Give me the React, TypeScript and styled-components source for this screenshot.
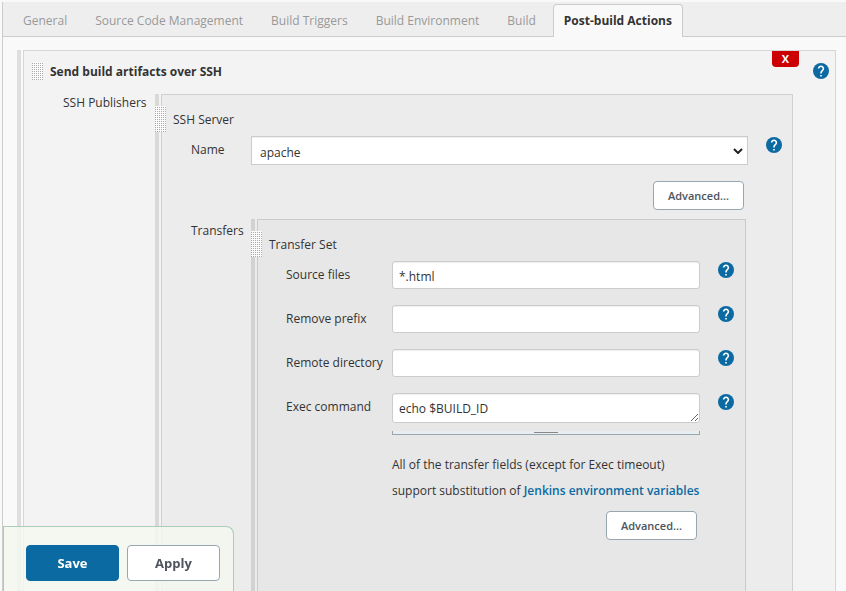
import React, { useId, useState } from 'react';
import styled, { createGlobalStyle, css } from 'styled-components';

const GlobalStyle = createGlobalStyle`
  *, *::before, *::after { box-sizing: border-box; }
  body {
    margin: 0;
    background: #f9f9f9;
    color: #333;
    font-family: 'Open Sans', 'Noto Sans', sans-serif;
    font-size: 12px;
  }
  button, input, select, textarea { font: inherit; color: inherit; margin: 0; }
`;

const Page = styled.div`
  display: flex;
  flex-direction: column;
  min-height: 100vh;
  padding: 2px 0 0 2px;
`;

const Frame = styled.main`
  display: flex;
  flex: 1;
  flex-direction: column;
  border-left: 1px solid #ccc;
`;

const TabBar = styled.nav`
  display: flex;
  align-items: flex-end;
  height: 35px;
  padding-left: 9px;
  background: #eee;
  border-bottom: 1px solid #ccc;
`;

const Tab = styled.button<{ $active?: boolean }>`
  height: 32px;
  padding: 0 10px;
  margin-right: 6px;
  border: 1px solid transparent;
  border-bottom: 0;
  border-radius: 4px 4px 0 0;
  background: transparent;
  color: #999;
  line-height: 32px;
  white-space: nowrap;
  cursor: pointer;
  ${(p) =>
    p.$active &&
    css`
      height: 33px;
      margin-bottom: -1px;
      border-color: #ccc;
      background: #f9f9f9;
      color: #333;
      font-weight: 700;
    `}
`;

const Content = styled.form`
  display: flex;
  flex: 1;
  flex-direction: column;
  padding: 13px 10px 0 14px;
`;

const ChunkOuter = styled.section<{ $bar: string }>`
  position: relative;
  display: flex;
  flex: 1;
  min-width: 0;
  padding-left: 2px;
  border-left: 4px solid ${(p) => p.$bar};
`;

const ChunkBody = styled.div<{ $fill: string; $line: string }>`
  display: flex;
  flex: 1;
  flex-direction: column;
  min-width: 0;
  background: ${(p) => p.$fill};
  border: 1px solid ${(p) => p.$line};
  border-bottom: 0;
`;

const Grip = styled.span<{ $floating?: boolean }>`
  width: 11px;
  height: 18px;
  background-color: #fbfbfb;
  background-image: conic-gradient(from 90deg at 1px 1px, transparent 270deg, #aaa 0);
  background-size: 2px 2px;
  background-position: 1px 1px;
  cursor: move;
  ${(p) =>
    p.$floating &&
    css`
      position: absolute;
      top: 12px;
      left: -4px;
      height: 26px;
    `}
`;

const StepHeader = styled.header`
  display: flex;
  align-items: flex-start;
  height: 43px;
  padding: 0 6px 0 8px;

  ${Grip} { margin: 11px 7px 0 0; }
`;

const StepTitle = styled.h2`
  flex: 1;
  margin: 9px 0 0;
  font-size: 12px;
  line-height: 24px;
`;

const DeleteButton = styled.button`
  width: 27px;
  height: 16px;
  margin-right: 14px;
  padding: 0;
  border: 0;
  border-radius: 0 0 4px 4px;
  background: #c00;
  color: #fff;
  font-size: 11px;
  font-weight: 700;
  line-height: 16px;
  cursor: pointer;
`;

const HelpButton = styled.button`
  display: block;
  width: 16px;
  height: 16px;
  padding: 0;
  border: 0;
  border-radius: 50%;
  background: transparent;
  color: #0b6aa2;
  cursor: pointer;

  ${StepHeader} & { margin-top: 12px; }
`;

const Heading = styled.h3`
  margin: 13px 0 4px 11px;
  font-size: 12px;
  font-weight: 400;
  line-height: 24px;
`;

const Row = styled.div<{ $label: number; $indent: number; $aside: number; $grow?: boolean }>`
  display: grid;
  grid-template-columns: ${(p) => p.$label}px minmax(0, 1fr) ${(p) => p.$aside}px;
  flex: ${(p) => (p.$grow ? '1' : 'none')};

  > :first-child { padding-left: ${(p) => p.$indent}px; }
  > ${HelpButton} { margin: 1px 0 0 18px; }
`;

const Label = styled.label<{ $line?: number }>`
  line-height: ${(p) => p.$line ?? 28}px;
  white-space: nowrap;
`;

const SelectBox = styled.div`
  display: grid;
  align-items: center;
  > * { grid-area: 1 / 1; }
  svg { justify-self: end; margin-right: 5px; pointer-events: none; }
`;

const Select = styled.select`
  appearance: none;
  width: 100%;
  height: 29px;
  padding: 4px 24px 0 8px;
  border: 1px solid #ccc;
  border-radius: 0;
  background: #fff;
  box-shadow: inset 0 1px 1px #eee;
`;

const fieldStyle = css`
  display: block;
  width: 100%;
  padding: 3px 6px 1px;
  border: 1px solid #ccc;
  border-radius: 3px;
  background: #fff;
  box-shadow: inset 0 1px 1px #eee;
`;

const Input = styled.input`
  ${fieldStyle}
  height: 28px;
`;

const TextArea = styled.textarea`
  ${fieldStyle}
  height: 30px;
  min-height: 30px;
  padding-top: 5px;
  line-height: 20px;
  overflow: hidden;
  resize: vertical;
`;

const ResizeStrip = styled.div`
  display: flex;
  justify-content: center;
  height: 4px;
  margin-top: 8px;
  border: 1px solid #98a6b0;
  border-top: 0;
  background: #e8edf2;

  &::before {
    content: '';
    width: 24px;
    height: 1px;
    margin-top: 1px;
    background: #888;
  }
`;

const Fields = styled.div`
  display: flex;
  flex-direction: column;
  gap: 16px;
`;

const Note = styled.p`
  margin: 17px 0 7px 134px;
  line-height: 26px;
`;

const NoteLine = styled.span`
  display: block;
  white-space: nowrap;
`;

const Link = styled.a`
  color: #0b6aa2;
  font-weight: 600;
  text-decoration: none;
`;

const Button = styled.button<{ $primary?: boolean; $large?: boolean }>`
  min-width: ${(p) => (p.$large ? 93 : 91)}px;
  height: ${(p) => (p.$large ? 36 : 29)}px;
  padding: 0;
  border: 1px solid ${(p) => (p.$primary ? '#0b6aa2' : '#98a6b0')};
  border-radius: 4px;
  background: ${(p) => (p.$primary ? '#0b6aa2' : '#fff')};
  color: ${(p) => (p.$primary ? '#fff' : '#4d545d')};
  font-size: ${(p) => (p.$large ? 13 : 11)}px;
  font-weight: ${(p) => (p.$large ? 700 : 600)};
  cursor: pointer;
`;

const ButtonRow = styled.div<{ $above?: boolean }>`
  display: flex;
  justify-content: flex-end;
  padding-right: 48px;
  ${(p) => p.$above && css`margin: 16px 0 9px;`}
`;

const SaveBar = styled.footer`
  position: fixed;
  bottom: 0;
  left: 3px;
  display: flex;
  gap: 8px;
  padding: 18px 13px 10px 22px;
  border: 1px solid #a9cdb9;
  border-bottom: 0;
  border-radius: 0 8px 0 0;
  background: rgba(244, 248, 239, 0.85);
`;

function Help({ topic }: { topic: string }) {
  return (
    <HelpButton type="button" aria-label={`Help for feature: ${topic}`}>
      <svg width="16" height="16" viewBox="2 2 20 20" fill="currentColor" aria-hidden="true">
        <circle cx="12" cy="12" r="10" />
        <path
          fill="#fff"
          d="M11 17h2v2h-2zM15.07 11.25l-.9.92C13.45 12.9 13 13.5 13 15h-2v-.5c0-1.1.45-2.1 1.17-2.83l1.24-1.26c.37-.36.59-.86.59-1.41 0-1.1-.9-2-2-2s-2 .9-2 2H8c0-2.21 1.79-4 4-4s4 1.79 4 4c0 .88-.36 1.68-.93 2.25z"
        />
      </svg>
    </HelpButton>
  );
}

function Chunk(props: { bar: string; fill: string; line: string; grip?: boolean; children: React.ReactNode }) {
  return (
    <ChunkOuter $bar={props.bar}>
      <ChunkBody $fill={props.fill} $line={props.line}>
        {props.children}
      </ChunkBody>
      {props.grip && <Grip $floating />}
    </ChunkOuter>
  );
}

function TransferField({ label, value = '', multiline }: { label: string; value?: string; multiline?: boolean }) {
  const id = useId();
  return (
    <Row $label={134} $indent={28} $aside={45}>
      <Label htmlFor={id}>{label}</Label>
      {multiline ? (
        <div>
          <TextArea id={id} rows={1} defaultValue={value} />
          <ResizeStrip />
        </div>
      ) : (
        <Input id={id} type="text" defaultValue={value} />
      )}
      <Help topic={label} />
    </Row>
  );
}

const TABS = [
  'General',
  'Source Code Management',
  'Build Triggers',
  'Build Environment',
  'Build',
  'Post-build Actions',
];

export default function App() {
  const [active, setActive] = useState('Post-build Actions');
  return (
    <Page>
      <GlobalStyle />
      <Frame>
        <TabBar>
          {TABS.map((tab) => (
            <Tab key={tab} type="button" $active={tab === active} onClick={() => setActive(tab)}>
              {tab}
            </Tab>
          ))}
        </TabBar>
        <Content>
          <Chunk bar="#dedede" fill="#f3f3f3" line="#d6d6d6">
            <StepHeader>
              <Grip />
              <StepTitle>Send build artifacts over SSH</StepTitle>
              <DeleteButton type="button" aria-label="Delete step">X</DeleteButton>
              <Help topic="Send build artifacts over SSH" />
            </StepHeader>
            <Row $label={131} $indent={39} $aside={42} $grow>
              <Label as="span" $line={18}>SSH Publishers</Label>
              <Chunk bar="#d9d9d9" fill="#ececec" line="#d0d0d0" grip>
                <Heading>SSH Server</Heading>
                <Row $label={89} $indent={29} $aside={44}>
                  <Label htmlFor="server-name">Name</Label>
                  <SelectBox>
                    <Select id="server-name" defaultValue="apache">
                      <option value="apache">apache</option>
                    </Select>
                    <svg width="10" height="6" viewBox="0 0 10 6" aria-hidden="true">
                      <path d="M1 1l4 4 4-4" fill="none" stroke="#222" strokeWidth="2" />
                    </svg>
                  </SelectBox>
                  <Help topic="Name" />
                </Row>
                <ButtonRow $above>
                  <Button type="button">Advanced...</Button>
                </ButtonRow>
                <Row $label={89} $indent={29} $aside={46} $grow>
                  <Label as="span" $line={24}>Transfers</Label>
                  <Chunk bar="#d2d2d2" fill="#e7e7e7" line="#cacaca" grip>
                    <Heading>Transfer Set</Heading>
                    <Fields>
                      <TransferField label="Source files" value="*.html" />
                      <TransferField label="Remove prefix" />
                      <TransferField label="Remote directory" />
                      <TransferField label="Exec command" value="echo $BUILD_ID" multiline />
                    </Fields>
                    <Note>
                      <NoteLine>All of the transfer fields (except for Exec timeout)</NoteLine>
                      <NoteLine>
                        support substitution of <Link href="#env-vars">Jenkins environment variables</Link>
                      </NoteLine>
                    </Note>
                    <ButtonRow>
                      <Button type="button">Advanced...</Button>
                    </ButtonRow>
                  </Chunk>
                </Row>
              </Chunk>
            </Row>
          </Chunk>
        </Content>
      </Frame>
      <SaveBar>
        <Button type="button" $primary $large>Save</Button>
        <Button type="button" $large>Apply</Button>
      </SaveBar>
    </Page>
  );
}
